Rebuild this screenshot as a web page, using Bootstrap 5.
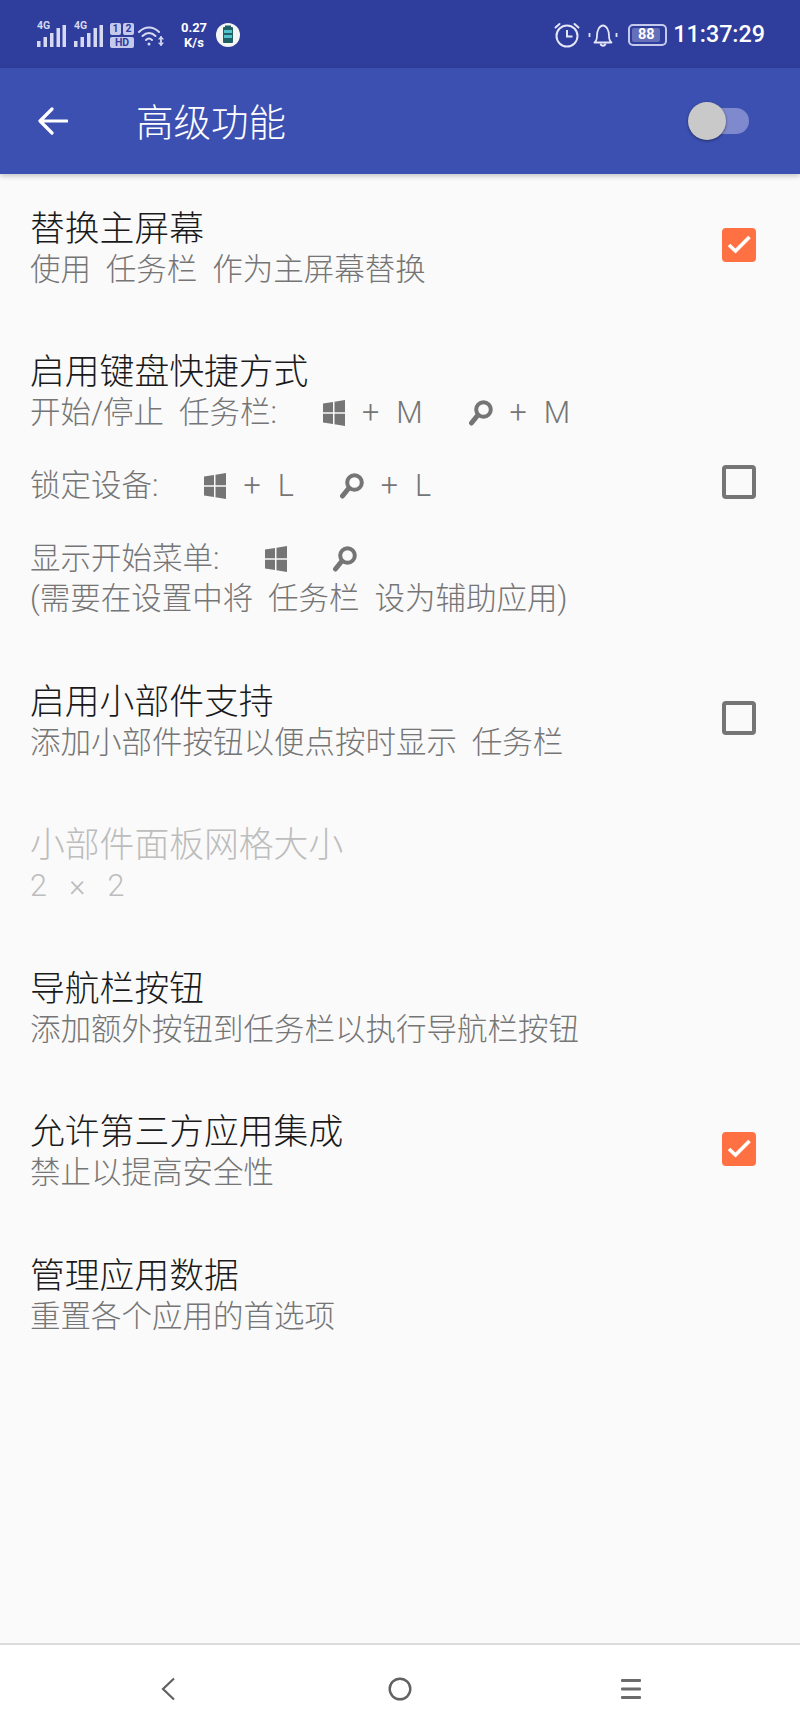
<!DOCTYPE html>
<html lang="zh-CN">

<head>
    <meta charset="UTF-8">
    <meta name="viewport" content="width=device-width, initial-scale=1.0">
    <title>高级功能</title>
    <link href="https://cdn.jsdelivr.net/npm/bootstrap@5.3.0/dist/css/bootstrap.min.css" rel="stylesheet">
    <style>
        html, body { height: 100%; }
        body {
            background: #fafafa;
            font-family: Roboto, "Noto Sans CJK SC", sans-serif;
            overflow: hidden;
        }

        /* 状态栏 */
        .status-strip {
            height: 68px;
            background: #2f3d9c;
            color: #fff;
            padding: 2px 35px 0 37px;
        }
        .status-strip svg { display: block; flex: none; }
        .sim-box { width: 29px; height: 25px; }
        .sim-tag { top: -2px; left: 0; font-size: 10.5px; line-height: 10px; font-weight: 700; color: #d5d9f2; }
        .speed-text { width: 32px; margin: 0 6px 0 13px; font-size: 13px; line-height: 15px; font-weight: 700; text-align: center; }
        .clock-text { font-size: 23.300px; line-height: 1; font-weight: 500; margin-left: 6px; }
        .bat-box { width: 39px; height: 22px; border: 2px solid #c5caec; border-radius: 5px; margin-left: 10px; padding: 2px; }
        .bat-fill { width: 28px; height: 14px; background: #6570b8; border-radius: 2px; font-size: 14.500px; line-height: 14px; font-weight: 700; text-align: center; }
        .dual-box { width: 24px; margin-left: 7px; font-size: 10.500px; line-height: 12px; font-weight: 700; color: #2f3d9c; }
        .dual-num { width: 11px; height: 12px; background: #c5caec; border-radius: 2px; text-align: center; }
        .dual-hd { height: 11px; line-height: 11px; margin-top: 2px; background: #c5caec; border-radius: 2px; text-align: center; }

        /* 标题栏 */
        .title-strip {
            height: 106px;
            background: #3c50b2;
            color: #fff;
            padding: 0 51px 0 38px;
            box-shadow: 0 2px 5px rgba(0, 0, 0, .22);
        }
        .title-text { margin-left: 68px; padding-top: 4px; font-size: 37.500px; line-height: 44px; font-weight: 300; }
        .switch-track { width: 42px; height: 26px; margin-left: auto; background: #7f89cd; border-radius: 13px; }
        .switch-thumb {
            top: -6px; left: -19px;
            width: 38px; height: 38px;
            background: #c9c9c9;
            border-radius: 50%;
            box-shadow: 0 1px 3px rgba(0, 0, 0, .45);
        }

        /* 设置项 */
        .pref-list { padding-top: 2px; }
        .pref-item { padding: 29.750px 44px 29.750px 30px; }
        .pref-title { margin-bottom: -2px; font-size: 34.800px; line-height: 46px; color: #1a1a1a; font-weight: 300; }
        .pref-sub { font-size: 30.500px; line-height: 40px; color: #757575; font-weight: 300; }
        .pref-off .pref-title, .pref-off .pref-sub { color: #bdbdbd; }
        .key-line { margin-top: 33px; }
        .key-set { gap: 17px; margin-left: 46px; font-weight: 300; }
        .key-set svg { flex: none; }

        .pref-check.form-check-input {
            flex: none;
            width: 34px;
            height: 34px;
            margin: 0 0 5px;
            background-color: transparent;
            border: 4px solid #757575;
            border-radius: 4px;
            opacity: 1;
        }
        .pref-check.form-check-input:checked {
            background-color: #ff7043;
            border-color: #ff7043;
            background-size: 100%;
            background-image: url("data:image/svg+xml,%3csvg xmlns='http://www.w3.org/2000/svg' viewBox='0 0 26 26'%3e%3cpath fill='none' stroke='%23fff' stroke-width='3.6' d='M3 13l6.5 6L23.500 5'/%3e%3c/svg%3e");
        }

        /* 底部导航 */
        .soft-keys {
            height: 90px;
            background: #fff;
            border-top: 2px solid #dcdcdc;
            gap: 207px;
        }
        .soft-keys svg { display: block; }
    </style>
</head>

<body class="d-flex flex-column">
    <svg width="0" height="0" class="position-absolute">
        <symbol id="win-logo" viewBox="0 0 22 26">
            <path fill="#757575" d="M0 3.500L10 2v10.300H0zM11.500 1.800L22 0v12.300H11.500zM0 13.700h10v10.300L0 22.500zM11.500 13.700H22V26l-10.500-1.800z" />
        </symbol>
        <symbol id="mag-glass" viewBox="0 0 24 26">
            <circle cx="14.500" cy="9.500" r="7.300" fill="none" stroke="#757575" stroke-width="4" />
            <path d="M8.500 15.500L2.500 23" stroke="#757575" stroke-width="5" stroke-linecap="round" />
        </symbol>
        <symbol id="sim-bars" viewBox="0 0 29 23">
            <path fill="#d5d9f2" d="M0 17h3.500v6H0zM6.500 13H10v10H6.500zM13 9h3.500v14H13zM19.500 4H23v19h-3.500zM25.500 1H29v22h-3.500z" />
        </symbol>
    </svg>

    <div class="status-strip d-flex align-items-center flex-none">
        <div class="sim-box position-relative">
            <svg width="29" height="25"><use href="#sim-bars" /></svg>
            <span class="sim-tag position-absolute">4G</span>
        </div>
        <div class="sim-box position-relative ms-2">
            <svg width="29" height="25"><use href="#sim-bars" /></svg>
            <span class="sim-tag position-absolute">4G</span>
        </div>
        <div class="dual-box">
            <div class="d-flex justify-content-between">
                <div class="dual-num">1</div>
                <div class="dual-num">2</div>
            </div>
            <div class="dual-hd">HD</div>
        </div>
        <svg class="ms-1" width="27" height="21" viewBox="0 0 27 21" fill="none" stroke="#d5d9f2" stroke-width="2" stroke-linecap="round">
            <path d="M1 7c6-6 14-6 20 0" />
            <path d="M4.500 11c4-4 9-4 13 0" />
            <path d="M8 15c2-2 4-2 6 0" />
            <circle cx="11" cy="19" r="1.500" fill="#d5d9f2" stroke="none" />
            <path d="M23 12v8" stroke-width="1.800" />
            <path d="M21 14l2-2 2 2M21 18l2 2 2-2" stroke-width="1.200" />
        </svg>
        <div class="speed-text">0.27<br>K/s</div>
        <svg width="24" height="24" viewBox="0 0 24 24">
            <circle cx="12" cy="12" r="12" fill="#f4f6f4" />
            <rect x="7" y="4" width="10" height="16" rx="1" fill="#1f5f66" />
            <rect x="8" y="7" width="8" height="3" fill="#4fc3c7" />
            <rect x="8" y="12" width="8" height="3" fill="#4fc3c7" />
            <rect x="9" y="2.500" width="6" height="1.500" fill="#1f5f66" />
        </svg>

        <div class="ms-auto d-flex align-items-center">
            <svg width="26" height="26" viewBox="0 0 26 26" fill="none" stroke="#e3e6f7" stroke-width="2">
                <circle cx="13" cy="14" r="10.500" />
                <path d="M13 8v6.500h5.500" />
                <path d="M1.500 5.500L5.500 2M24.500 5.500L20.500 2" stroke-linecap="round" />
            </svg>
            <svg class="ms-2" width="30" height="26" viewBox="0 0 30 26" fill="none" stroke="#e3e6f7" stroke-width="1.800">
                <path d="M6.500 20.500c2-1.500 2.500-3 2.500-7 0-5 2.500-10 6-10s6 5 6 10c0 4 .5 5.500 2.500 7z" stroke-linejoin="round" />
                <path d="M12.500 21.500c.5 3 4.500 3 5 0" />
                <path d="M1.500 11v4M28.500 11v4" />
            </svg>
            <div class="bat-box">
                <div class="bat-fill">88</div>
            </div>
            <div class="clock-text">11:37:29</div>
        </div>
    </div>

    <div class="title-strip d-flex align-items-center position-relative">
        <svg width="30" height="28" viewBox="0 0 30 28" fill="none" stroke="#fff" stroke-width="3.200" stroke-linecap="round" stroke-linejoin="round">
            <path d="M29 14H3M14 2L2 14l12 12" />
        </svg>
        <div class="title-text">高级功能</div>
        <div class="switch-track position-relative">
            <div class="switch-thumb position-absolute"></div>
        </div>
    </div>

    <div class="pref-list flex-grow-1">
        <div class="pref-item d-flex align-items-center justify-content-between">
            <div>
                <div class="pref-title">替换主屏幕</div>
                <div class="pref-sub">使用&nbsp;&nbsp;任务栏&nbsp;&nbsp;作为主屏幕替换</div>
            </div>
            <input class="form-check-input pref-check" type="checkbox" checked>
        </div>

        <div class="pref-item d-flex align-items-center justify-content-between">
            <div>
                <div class="pref-title">启用键盘快捷方式</div>
                <div class="pref-sub d-flex align-items-center">
                    <span>开始/停止&nbsp;&nbsp;任务栏:</span>
                    <span class="key-set d-flex align-items-center">
                        <svg width="22" height="26"><use href="#win-logo" /></svg><span>+</span><span>M</span>
                    </span>
                    <span class="key-set d-flex align-items-center">
                        <svg width="24" height="26"><use href="#mag-glass" /></svg><span>+</span><span>M</span>
                    </span>
                </div>
                <div class="pref-sub key-line d-flex align-items-center">
                    <span>锁定设备:</span>
                    <span class="key-set d-flex align-items-center">
                        <svg width="22" height="26"><use href="#win-logo" /></svg><span>+</span><span>L</span>
                    </span>
                    <span class="key-set d-flex align-items-center">
                        <svg width="24" height="26"><use href="#mag-glass" /></svg><span>+</span><span>L</span>
                    </span>
                </div>
                <div class="pref-sub key-line d-flex align-items-center">
                    <span>显示开始菜单:</span>
                    <span class="key-set d-flex align-items-center">
                        <svg width="22" height="26"><use href="#win-logo" /></svg>
                    </span>
                    <span class="key-set d-flex align-items-center">
                        <svg width="24" height="26"><use href="#mag-glass" /></svg>
                    </span>
                </div>
                <div class="pref-sub">(需要在设置中将&nbsp;&nbsp;任务栏&nbsp;&nbsp;设为辅助应用)</div>
            </div>
            <input class="form-check-input pref-check" type="checkbox">
        </div>

        <div class="pref-item d-flex align-items-center justify-content-between">
            <div>
                <div class="pref-title">启用小部件支持</div>
                <div class="pref-sub">添加小部件按钮以便点按时显示&nbsp;&nbsp;任务栏</div>
            </div>
            <input class="form-check-input pref-check" type="checkbox">
        </div>

        <div class="pref-item pref-off">
            <div class="pref-title">小部件面板网格大小</div>
            <div class="pref-sub">2 &nbsp;&nbsp;× &nbsp;&nbsp;2</div>
        </div>

        <div class="pref-item">
            <div class="pref-title">导航栏按钮</div>
            <div class="pref-sub">添加额外按钮到任务栏以执行导航栏按钮</div>
        </div>

        <div class="pref-item d-flex align-items-center justify-content-between">
            <div>
                <div class="pref-title">允许第三方应用集成</div>
                <div class="pref-sub">禁止以提高安全性</div>
            </div>
            <input class="form-check-input pref-check" type="checkbox" checked>
        </div>

        <div class="pref-item">
            <div class="pref-title">管理应用数据</div>
            <div class="pref-sub">重置各个应用的首选项</div>
        </div>
    </div>

    <div class="soft-keys d-flex align-items-center justify-content-center">
        <svg width="24" height="24" viewBox="0 0 24 24" fill="none" stroke="#616161" stroke-width="2.200">
            <path d="M17 1.500L6 12l11 10.500" />
        </svg>
        <svg width="24" height="24" viewBox="0 0 24 24" fill="none" stroke="#616161" stroke-width="2.400">
            <circle cx="12" cy="12" r="10.300" />
        </svg>
        <svg width="24" height="24" viewBox="0 0 24 24" fill="#6b6b6b">
            <rect x="2" y="2" width="20" height="3" rx="1" />
            <rect x="2" y="10.500" width="20" height="3" rx="1" />
            <rect x="2" y="19" width="20" height="3" rx="1" />
        </svg>
    </div>

    <script src="https://cdn.jsdelivr.net/npm/bootstrap@5.3.0/dist/js/bootstrap.bundle.min.js"></script>
</body>

</html>
